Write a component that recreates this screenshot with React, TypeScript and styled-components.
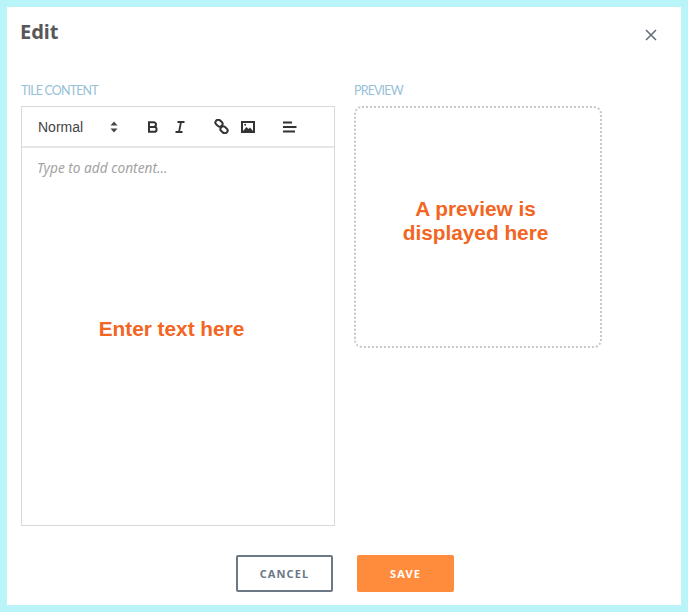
import React from 'react';
import styled, { createGlobalStyle } from 'styled-components';

const GlobalStyle = createGlobalStyle`
  html, body {
    margin: 0;
    padding: 0;
    background: #b9f4f8;
  }
`;

const Frame = styled.div`
  width: 688px;
  height: 612px;
  box-sizing: border-box;
  padding: 7px;
  background: #b9f4f8;
`;

const Dialog = styled.div`
  width: 674px;
  height: 598px;
  box-sizing: border-box;
  padding: 12px 14px 0;
  background: #fff;
  display: flex;
  flex-direction: column;
`;

const Header = styled.div`
  display: flex;
  justify-content: space-between;
  height: 64px;
`;

const Title = styled.h1`
  margin: 0 0 0 -1px;
  font-family: 'Noto Sans', sans-serif;
  font-size: 20px;
  line-height: 26px;
  font-weight: 700;
  color: #58585a;
`;

const CloseButton = styled.button`
  border: 0;
  padding: 0;
  margin: 9px 9px 0 0;
  width: 14px;
  height: 14px;
  background: none;
  display: flex;
`;

const Columns = styled.div`
  display: flex;
  align-items: flex-start;
  gap: 19px;
`;

const Column = styled.div<{ $width: number }>`
  width: ${p => p.$width}px;
  display: flex;
  flex-direction: column;
`;

const Label = styled.div`
  font-family: Lato, sans-serif;
  font-size: 12.5px;
  letter-spacing: -0.85px;
  line-height: 15px;
  height: 15px;
  margin-bottom: 8px;
  color: #97c1d6;
`;

const Editor = styled.div`
  height: 420px;
  box-sizing: border-box;
  border: 1px solid #d9d9d9;
  display: flex;
  flex-direction: column;
`;

const Toolbar = styled.div`
  height: 41px;
  flex: none;
  box-sizing: border-box;
  border-bottom: 2px solid #e6e6e6;
  display: flex;
  align-items: center;
  padding-left: 16px;
`;

const Select = styled.div`
  width: 80px;
  display: flex;
  align-items: center;
  justify-content: space-between;
  font-family: 'Liberation Sans', sans-serif;
  font-size: 14px;
  color: #444;
`;

const ToolIcon = styled.svg<{ $left: number }>`
  flex: none;
  margin-left: ${p => p.$left}px;
`;

const Body = styled.div`
  flex: 1;
  display: flex;
  flex-direction: column;
  align-items: center;
`;

const Placeholder = styled.div`
  align-self: stretch;
  padding: 11px 15px 0;
  font-family: 'Noto Sans', sans-serif;
  font-style: italic;
  font-size: 13.7px;
  line-height: 18px;
  color: #a3a3a3;
`;

const Hint = styled.div`
  font-family: 'Liberation Sans', sans-serif;
  font-weight: 700;
  font-size: 20.8px;
  line-height: 24px;
  color: #f26522;
  text-align: center;
`;

const EditorHint = styled(Hint)`
  margin-top: 140px;
  margin-left: -13px;
`;

const Preview = styled.div`
  height: 242px;
  box-sizing: border-box;
  border: 2px dotted #c8c8c8;
  border-radius: 8px;
  padding: 89px 5px 0 0;
`;

const Footer = styled.div`
  display: flex;
  justify-content: center;
  gap: 24px;
  margin-top: 29px;
  padding-left: 2px;
`;

const Button = styled.button<{ $primary?: boolean }>`
  width: 97px;
  height: 37px;
  box-sizing: border-box;
  border-radius: 2px;
  border: 2px solid ${p => (p.$primary ? '#ff8c3d' : '#6b7885')};
  background: ${p => (p.$primary ? '#ff8c3d' : '#fff')};
  color: ${p => (p.$primary ? '#fff' : '#6b7885')};
  font-family: 'Noto Sans', sans-serif;
  font-weight: 700;
  font-size: 11px;
  letter-spacing: 1.1px;
  padding: 0;
`;

const App: React.FC = () => {
  return (
    <Frame>
      <GlobalStyle />
      <Dialog>
        <Header>
          <Title>Edit</Title>
          <CloseButton aria-label="Close">
            <svg width="14" height="14" viewBox="0 0 14 14">
              <path d="M2 2l10 10M12 2L2 12" stroke="#5f6b7a" strokeWidth="1.5" fill="none" />
            </svg>
          </CloseButton>
        </Header>
        <Columns>
          <Column $width={314}>
            <Label>TILE CONTENT</Label>
            <Editor>
              <Toolbar>
                <Select>
                  Normal
                  <svg width="8" height="12" viewBox="0 0 8 12">
                    <path d="M4 0.5L7.5 4.5H0.5zM4 11.5L0.5 7.5H7.5z" fill="#444" />
                  </svg>
                </Select>
                <ToolIcon $left={29} width="12" height="12" viewBox="0 0 12 12">
                  <path
                    d="M2 1.2h4.6a2.3 2.3 0 0 1 0 4.8H2zM2 6h5.2a2.4 2.4 0 0 1 0 4.8H2z"
                    fill="none"
                    stroke="#333"
                    strokeWidth="2"
                  />
                </ToolIcon>
                <ToolIcon $left={15} width="12" height="12" viewBox="0 0 12 12">
                  <path d="M3.5 1h7M1.5 11h7M7 1L5 11" fill="none" stroke="#333" strokeWidth="1.8" />
                </ToolIcon>
                <ToolIcon $left={28} width="15" height="15" viewBox="0 0 15 15">
                  <g fill="none" stroke="#333" strokeWidth="2">
                    <rect x="1" y="1.5" width="7.5" height="5.5" rx="2.7" transform="rotate(40 5 4.5)" />
                    <rect x="6.5" y="8" width="7.5" height="5.5" rx="2.7" transform="rotate(40 10 10.5)" />
                  </g>
                </ToolIcon>
                <ToolIcon $left={12} width="14" height="12" viewBox="0 0 14 12">
                  <rect x="1" y="1" width="12" height="10" fill="none" stroke="#333" strokeWidth="2" />
                  <path d="M2 10l3.5-4 2 2 1.5-1.5 3 3.5z" fill="#333" />
                  <circle cx="4.2" cy="3.8" r="1" fill="#333" />
                </ToolIcon>
                <ToolIcon $left={28} width="14" height="12" viewBox="0 0 14 12">
                  <path d="M0 1.5h9M0 6h13.5M0 10.5h12" fill="none" stroke="#333" strokeWidth="1.8" />
                </ToolIcon>
              </Toolbar>
              <Body>
                <Placeholder>Type to add content...</Placeholder>
                <EditorHint>Enter text here</EditorHint>
              </Body>
            </Editor>
          </Column>
          <Column $width={248}>
            <Label>PREVIEW</Label>
            <Preview>
              <Hint>
                A preview is
                <br />
                displayed here
              </Hint>
            </Preview>
          </Column>
        </Columns>
        <Footer>
          <Button>CANCEL</Button>
          <Button $primary>SAVE</Button>
        </Footer>
      </Dialog>
    </Frame>
  );
};

export default App;
